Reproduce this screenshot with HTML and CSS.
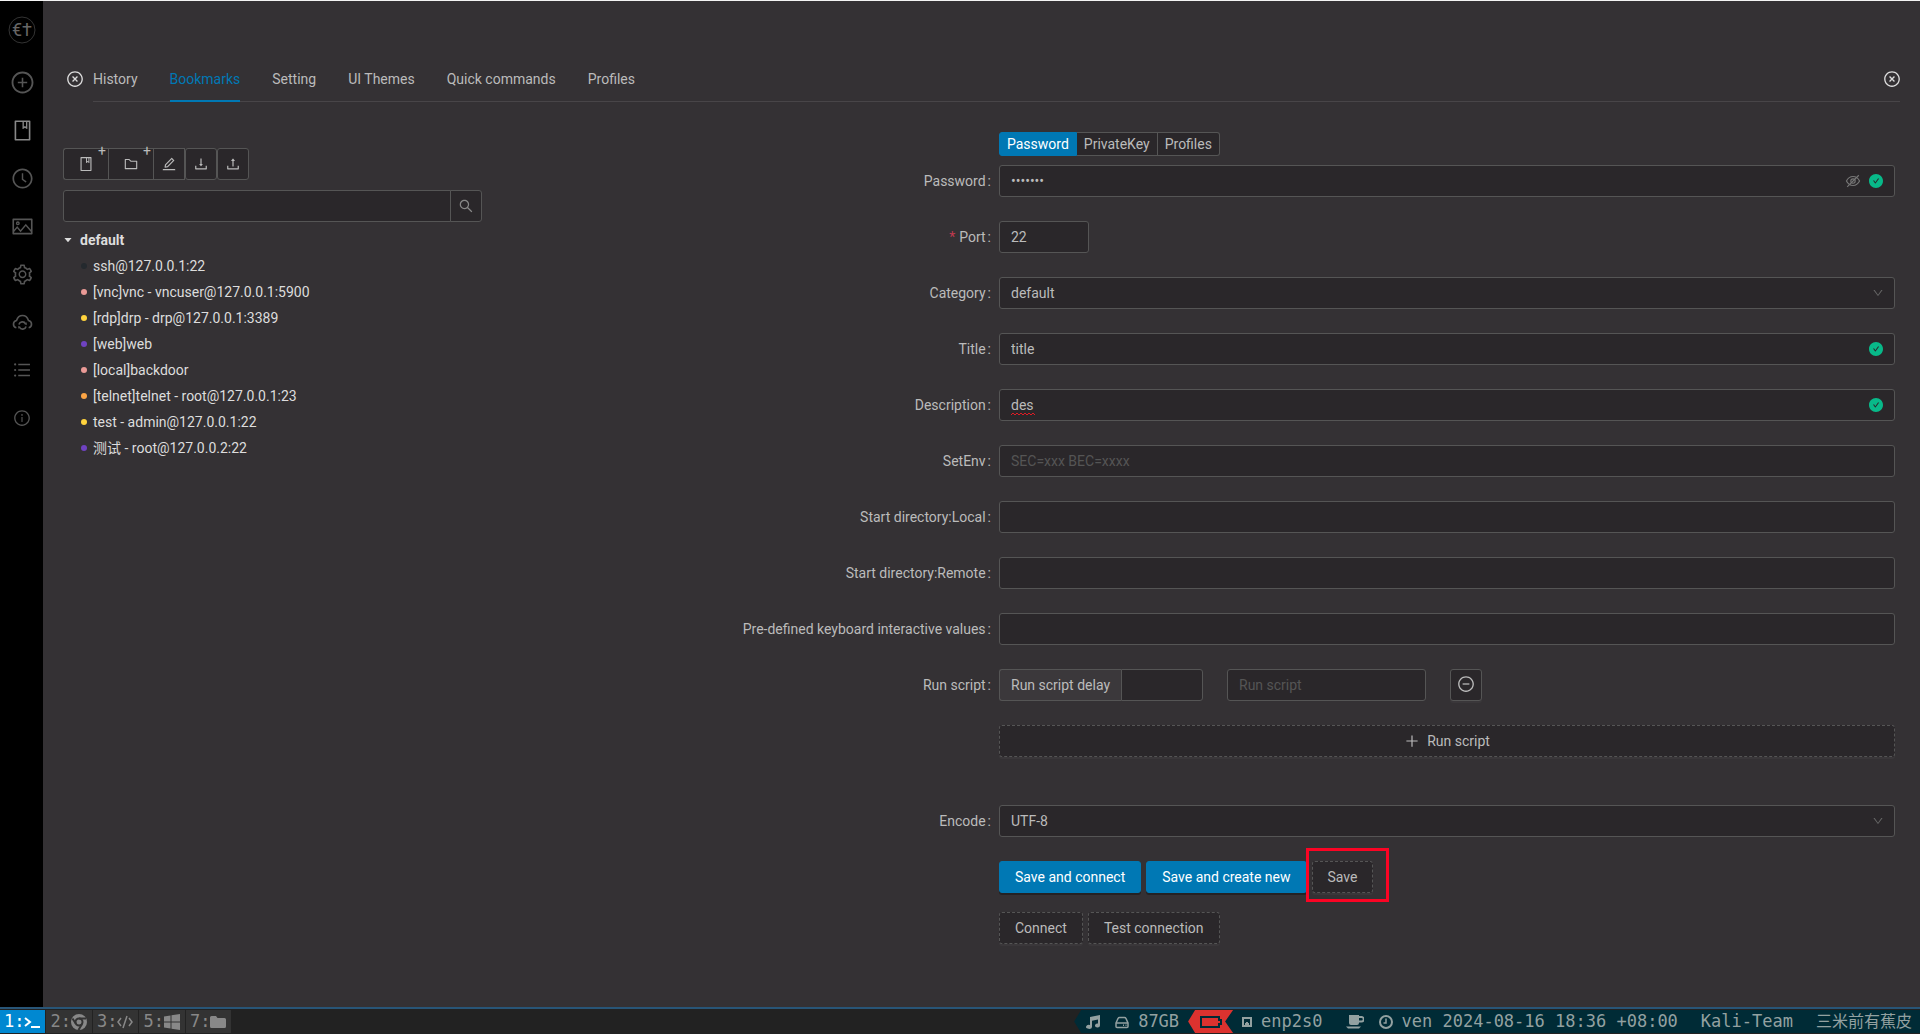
FILE: index.html
```html
<!DOCTYPE html>
<html lang="en">
<head>
  <meta charset="UTF-8">
  <meta name="viewport" content="width=device-width, initial-scale=1.0">
  <title>Bookmarks</title>
  <link rel="stylesheet" href="styles.css">
</head>
<body>
  <!-- Shared icons -->
  <svg class="sprite" aria-hidden="true">
    <symbol id="ring" viewBox="0 0 1024 1024"><path d="M512 64C264.6 64 64 264.6 64 512s200.6 448 448 448 448-200.6 448-448S759.4 64 512 64zm0 820c-205.4 0-372-166.6-372-372s166.6-372 372-372 372 166.6 372 372-166.6 372-372 372z"/></symbol>
    <symbol id="close-circle" viewBox="0 0 1024 1024"><use href="#ring"/><path d="M372 372l280 280M652 372L372 652" stroke="currentColor" stroke-width="76"/></symbol>
    <symbol id="plus-circle" viewBox="0 0 1024 1024"><use href="#ring"/><path d="M480 320h64v160h160v64H544v160h-64V544H320v-64h160z"/></symbol>
    <symbol id="minus-circle" viewBox="0 0 1024 1024"><use href="#ring"/><path d="M320 476h384v72H320z"/></symbol>
    <symbol id="clock" viewBox="0 0 1024 1024"><use href="#ring"/><path d="M686.7 638.6L544.1 535.5V288c0-4.4-3.6-8-8-8H488c-4.4 0-8 3.6-8 8v275.4c0 2.6 1.2 5 3.3 6.5l165.4 120.6c3.6 2.6 8.6 1.8 11.2-1.7l28.6-39c2.6-3.7 1.8-8.7-1.8-11.2z"/></symbol>
    <symbol id="info" viewBox="0 0 1024 1024"><use href="#ring"/><path d="M464 336a48 48 0 1096 0 48 48 0 10-96 0zm72 112h-48c-4.4 0-8 3.6-8 8v272c0 4.4 3.6 8 8 8h48c4.4 0 8-3.6 8-8V456c0-4.4-3.6-8-8-8z"/></symbol>
    <symbol id="book" viewBox="0 0 1024 1024"><path d="M832 64H192c-17.7 0-32 14.3-32 32v832c0 17.7 14.3 32 32 32h640c17.7 0 32-14.3 32-32V96c0-17.7-14.3-32-32-32zm-260 72h96v209.9L621.5 312 572 347.4V136zm220 752H232V136h280v296.9c0 3.3 1 6.6 3 9.3a15.9 15.9 0 0022.3 3.7l83.8-59.9 81.4 59.4c2.7 2 6 3.1 9.4 3.1 8.8 0 16-7.2 16-16V136h64v752z"/></symbol>
    <symbol id="picture" viewBox="0 0 1024 1024"><path d="M928 160H96c-17.7 0-32 14.3-32 32v640c0 17.7 14.3 32 32 32h832c17.7 0 32-14.3 32-32V192c0-17.7-14.3-32-32-32zm-40 632H136v-39.9l138.5-164.3 150.1 178L658.1 489 888 761.6V792zm0-129.8L664.2 396.8c-3.2-3.8-9-3.8-12.2 0L424.6 666.4l-144-170.7c-3.2-3.8-9-3.8-12.2 0L136 652.7V232h752v430.2zM304 456a88 88 0 100-176 88 88 0 000 176zm0-116c15.5 0 28 12.5 28 28s-12.5 28-28 28-28-12.5-28-28 12.5-28 28-28z"/></symbol>
    <symbol id="setting" viewBox="0 0 1024 1024"><path d="M924.8 625.7l-65.5-56c3.1-19 4.7-38.4 4.7-57.8s-1.6-38.8-4.7-57.8l65.5-56a32.03 32.03 0 009.3-35.2l-.9-2.6a443.74 443.74 0 00-79.7-137.9l-1.8-2.1a32.12 32.12 0 00-35.1-9.5l-81.3 28.9c-30-24.6-63.5-44-99.7-57.6l-15.7-85a32.05 32.05 0 00-25.8-25.7l-2.7-.5c-52.1-9.4-106.9-9.4-159 0l-2.7.5a32.05 32.05 0 00-25.8 25.7l-15.8 85.4a351.86 351.86 0 00-99 57.4l-81.9-29.1a32 32 0 00-35.1 9.5l-1.8 2.1a446.02 446.02 0 00-79.7 137.9l-.9 2.6c-4.5 12.5-.8 26.5 9.3 35.2l66.3 56.6c-3.1 18.8-4.6 38-4.6 57.1 0 19.2 1.5 38.4 4.6 57.1L99 625.5a32.03 32.03 0 00-9.3 35.2l.9 2.6c18.1 50.4 44.9 96.9 79.7 137.9l1.8 2.1a32.12 32.12 0 0035.1 9.5l81.9-29.1c29.8 24.5 63.1 43.9 99 57.4l15.8 85.4a32.05 32.05 0 0025.8 25.7l2.7.5a449.4 449.4 0 00159 0l2.7-.5a32.05 32.05 0 0025.8-25.7l15.7-85a350 350 0 0099.7-57.6l81.3 28.9a32 32 0 0035.1-9.5l1.8-2.1c34.8-41.1 61.6-87.5 79.7-137.9l.9-2.6c4.5-12.3.8-26.3-9.3-35zM788.3 465.9c2.5 15.1 3.8 30.6 3.8 46.1s-1.3 31-3.8 46.1l-6.6 40.1 74.7 63.9a370.03 370.03 0 01-42.6 73.6L721 702.8l-31.4 25.8c-23.9 19.6-50.5 35-79.3 45.8l-38.1 14.3-17.9 97a377.5 377.5 0 01-85 0l-17.9-97.2-37.8-14.5c-28.5-10.8-55-26.2-78.7-45.7l-31.4-25.9-93.4 33.2c-17-22.9-31.2-47.6-42.6-73.6l75.5-64.5-6.5-40c-2.4-14.9-3.7-30.3-3.7-45.5 0-15.3 1.2-30.6 3.7-45.5l6.5-40-75.5-64.5c11.3-26.1 25.6-50.7 42.6-73.6l93.4 33.2 31.4-25.9c23.7-19.5 50.2-34.9 78.7-45.7l37.9-14.3 17.9-97.2c28.1-3.2 56.8-3.2 85 0l17.9 97 38.1 14.3c28.7 10.8 55.4 26.2 79.3 45.8l31.4 25.8 92.8-32.9c17 22.9 31.2 47.6 42.6 73.6L781.8 426l6.5 39.9zM512 326c-97.2 0-176 78.8-176 176s78.8 176 176 176 176-78.8 176-176-78.8-176-176-176zm79.2 255.2A111.6 111.6 0 01512 614c-29.9 0-58-11.7-79.2-32.8A111.6 111.6 0 01400 502c0-29.9 11.7-58 32.8-79.2C454 401.6 482.1 390 512 390c29.9 0 58 11.6 79.2 32.8A111.6 111.6 0 01624 502c0 29.9-11.7 58-32.8 79.2z"/></symbol>
    <symbol id="cloud-sync" viewBox="0 0 1024 1024"><g fill="none" stroke="currentColor" stroke-width="72"><path d="M238 748A168 168 0 01246 420C292 286 394 200 512 200s220 86 266 220a168 168 0 018 328"/><path d="M352 600a162 162 0 01300-30M672 690a162 162 0 01-300 30"/></g><path d="M700 500v130l-110-50zM324 790V660l110 50z"/></symbol>
    <symbol id="list" viewBox="0 0 1024 1024"><path d="M320 192h600v72H320zM320 476h600v72H320zM320 760h600v72H320z"/><circle cx="160" cy="228" r="56"/><circle cx="160" cy="512" r="56"/><circle cx="160" cy="796" r="56"/></symbol>
    <symbol id="folder" viewBox="0 0 1024 1024"><path d="M880 298.4H521L403.7 186.2a8.15 8.15 0 00-5.5-2.2H144c-17.7 0-32 14.3-32 32v592c0 17.7 14.3 32 32 32h736c17.7 0 32-14.3 32-32V330.4c0-17.7-14.3-32-32-32zM840 768H184V256h188.5l119.6 114.4H840V768z"/></symbol>
    <symbol id="edit" viewBox="0 0 1024 1024"><path d="M257.7 752c2 0 4-.2 6-.5L431.9 722c2-.4 3.9-1.3 5.3-2.8l423.9-423.9a9.96 9.96 0 000-14.1L694.9 114.9c-1.9-1.9-4.4-2.9-7.1-2.9s-5.2 1-7.1 2.9L256.8 538.8c-1.5 1.5-2.4 3.3-2.8 5.3l-29.5 168.2a33.5 33.5 0 009.4 29.8c6.6 6.4 14.9 9.9 23.8 9.9zm67.4-174.4L687.8 215l73.3 73.3-362.7 362.6-88.9 15.7 15.6-89zM880 836H144c-17.7 0-32 14.3-32 32v36c0 4.4 3.6 8 8 8h784c4.4 0 8-3.6 8-8v-36c0-17.7-14.3-32-32-32z"/></symbol>
    <symbol id="tray" viewBox="0 0 1024 1024"><path d="M878 626h-60c-4.4 0-8 3.6-8 8v154H214V634c0-4.4-3.6-8-8-8h-60c-4.4 0-8 3.6-8 8v198c0 17.7 14.3 32 32 32h684c17.7 0 32-14.3 32-32V634c0-4.4-3.6-8-8-8z"/></symbol>
    <symbol id="download" viewBox="0 0 1024 1024"><use href="#tray"/><path d="M505.7 661a8 8 0 0012.6 0l112-141.7c4.1-5.2.4-12.9-6.3-12.9h-74.1V168c0-4.4-3.6-8-8-8h-60c-4.4 0-8 3.6-8 8v338.3H400c-6.7 0-10.4 7.7-6.3 12.9l112 141.8z"/></symbol>
    <symbol id="upload" viewBox="0 0 1024 1024"><use href="#tray"/><path d="M400 317.7h73.9V656c0 4.4 3.6 8 8 8h60c4.4 0 8-3.6 8-8V317.7H624c6.7 0 10.4-7.7 6.3-12.9L518.3 163a8 8 0 00-12.6 0l-112 141.7c-4.1 5.3-.4 13 6.3 13z"/></symbol>
    <symbol id="search" viewBox="0 0 1024 1024"><path d="M909.6 854.5L649.9 594.8C690.2 542.7 712 479 712 412c0-80.2-31.3-155.4-87.9-212.1-56.6-56.7-132-87.9-212.1-87.9s-155.5 31.3-212.1 87.9C143.2 256.5 112 331.8 112 412c0 80.1 31.3 155.5 87.9 212.1C256.5 680.8 331.8 712 412 712c67 0 130.6-21.8 182.7-62l259.7 259.6a8.2 8.2 0 0011.6 0l43.6-43.5a8.2 8.2 0 000-11.6zM570.4 570.4C528 612.7 471.8 636 412 636s-116-23.3-158.4-65.6C211.3 528 188 471.8 188 412s23.3-116.1 65.6-158.4C296 211.3 352.2 188 412 188s116.1 23.2 158.4 65.6S636 352.2 636 412s-23.3 116.1-65.6 158.4z"/></symbol>
    <symbol id="caret-down" viewBox="0 0 1024 1024"><path d="M840.4 300H183.6c-19.7 0-30.7 20.8-18.5 35l328.4 380.8c9.4 10.9 27.5 10.9 37 0L858.9 335c12.2-14.2 1.2-35-18.5-35z"/></symbol>
    <symbol id="down" viewBox="0 0 1024 1024"><path d="M884 256h-75c-5.1 0-9.9 2.5-12.9 6.6L512 654.2 227.9 262.6c-3-4.1-7.8-6.6-12.9-6.6h-75c-6.5 0-10.3 7.4-6.5 12.7l352.6 486.1c12.8 17.6 39 17.6 51.7 0l352.6-486.1c3.9-5.3.1-12.7-6.4-12.7z"/></symbol>
    <symbol id="check" viewBox="0 0 1024 1024"><path d="M512 64C264.6 64 64 264.6 64 512s200.6 448 448 448 448-200.6 448-448S759.4 64 512 64zm193.5 301.7l-210.6 292a31.8 31.8 0 01-51.7 0L318.5 484.9c-3.8-5.3 0-12.7 6.5-12.7h46.9c10.2 0 19.9 4.9 25.9 13.3l71.2 98.8 157.2-218c6-8.3 15.6-13.3 25.9-13.3H699c6.5 0 10.3 7.4 6.5 12.7z"/></symbol>
    <symbol id="eye-off" viewBox="0 0 1024 1024"><g fill="none" stroke="currentColor" stroke-width="72"><path d="M92 512C190 320 330 226 512 226s322 94 420 286c-98 192-238 286-420 286S190 704 92 512z"/><circle cx="512" cy="512" r="140"/><path d="M140 888L884 144"/></g></symbol>
    <symbol id="plus" viewBox="0 0 1024 1024"><path d="M474 152h76v322h322v76H550v322h-76V550H152v-76h322z"/></symbol>
  </svg>

  <div class="app">
    <div class="workspace">
      <nav class="sidebar">
        <a class="logo" href="#" aria-label="Home">
          <svg viewBox="0 0 28 28"><circle cx="14" cy="14" r="13"/><text x="14" y="20">€†</text></svg>
        </a>
        <a href="#" aria-label="New"><svg class="icon icon-xl"><use href="#plus-circle"/></svg></a>
        <a href="#" class="active" aria-label="Bookmarks"><svg class="icon icon-lg"><use href="#book"/></svg></a>
        <a href="#" aria-label="History"><svg class="icon icon-lg"><use href="#clock"/></svg></a>
        <a href="#" aria-label="Themes"><svg class="icon icon-lg"><use href="#picture"/></svg></a>
        <a href="#" aria-label="Setting"><svg class="icon icon-lg"><use href="#setting"/></svg></a>
        <a href="#" aria-label="Sync"><svg class="icon icon-lg"><use href="#cloud-sync"/></svg></a>
        <a href="#" aria-label="Batch"><svg class="icon icon-md"><use href="#list"/></svg></a>
        <a href="#" aria-label="About"><svg class="icon icon-sm"><use href="#info"/></svg></a>
      </nav>

      <main>
        <header class="topbar">
          <button class="close" aria-label="Close"><svg class="icon icon-sm"><use href="#close-circle"/></svg></button>
          <nav class="tabs">
            <a href="#">History</a>
            <a href="#" class="active">Bookmarks</a>
            <a href="#">Setting</a>
            <a href="#">UI Themes</a>
            <a href="#">Quick commands</a>
            <a href="#">Profiles</a>
          </nav>
          <button class="close close-right" aria-label="Close"><svg class="icon icon-sm"><use href="#close-circle"/></svg></button>
        </header>

        <div class="columns">
          <section class="bookmarks">
            <div class="tools">
              <button class="tool wide" aria-label="New bookmark"><svg class="icon icon-tool"><use href="#book"/></svg><span class="add">+</span></button>
              <button class="tool wide" aria-label="New category"><svg class="icon icon-tool"><use href="#folder"/></svg><span class="add">+</span></button>
              <button class="tool" aria-label="Edit"><svg class="icon icon-tool"><use href="#edit"/></svg></button>
              <button class="tool round" aria-label="Import"><svg class="icon icon-tool"><use href="#download"/></svg></button>
              <button class="tool round" aria-label="Export"><svg class="icon icon-tool"><use href="#upload"/></svg></button>
            </div>
            <div class="search">
              <input type="text" class="field" aria-label="Search bookmarks">
              <button class="search-btn" aria-label="Search"><svg class="icon icon-tool"><use href="#search"/></svg></button>
            </div>
            <div class="category"><svg class="icon icon-caret"><use href="#caret-down"/></svg>default</div>
            <ul class="tree">
              <li><i class="dot dark"></i>ssh@127.0.0.1:22</li>
              <li><i class="dot pink"></i>[vnc]vnc - vncuser@127.0.0.1:5900</li>
              <li><i class="dot yellow"></i>[rdp]drp - drp@127.0.0.1:3389</li>
              <li><i class="dot purple"></i>[web]web</li>
              <li><i class="dot pink"></i>[local]backdoor</li>
              <li><i class="dot orange"></i>[telnet]telnet - root@127.0.0.1:23</li>
              <li><i class="dot yellow"></i>test - admin@127.0.0.1:22</li>
              <li><i class="dot purple"></i>测试 - root@127.0.0.2:22</li>
            </ul>
          </section>

          <form class="form" onsubmit="return false">
            <div class="row auth">
              <div class="control segmented">
                <input type="radio" name="auth" id="auth-password" checked><label for="auth-password">Password</label>
                <input type="radio" name="auth" id="auth-key"><label for="auth-key">PrivateKey</label>
                <input type="radio" name="auth" id="auth-profiles"><label for="auth-profiles">Profiles</label>
              </div>
            </div>
            <div class="row">
              <label class="label" for="password">Password</label>
              <div class="control">
                <input class="field" type="password" id="password" value="1234567">
                <span class="suffix"><svg class="icon icon-tool"><use href="#eye-off"/></svg><svg class="icon icon-ok"><use href="#check"/></svg></span>
              </div>
            </div>
            <div class="row">
              <label class="label required" for="port">Port</label>
              <div class="control"><input class="field short" type="text" id="port" value="22"></div>
            </div>
            <div class="row">
              <label class="label" for="category">Category</label>
              <div class="control">
                <select class="field" id="category"><option>default</option></select>
                <span class="suffix arrow"><svg class="icon icon-down"><use href="#down"/></svg></span>
              </div>
            </div>
            <div class="row">
              <label class="label" for="title">Title</label>
              <div class="control">
                <input class="field" type="text" id="title" value="title">
                <span class="suffix"><svg class="icon icon-ok"><use href="#check"/></svg></span>
              </div>
            </div>
            <div class="row">
              <label class="label" for="description">Description</label>
              <div class="control">
                <input class="field" type="text" id="description" value="des">
                <svg class="squiggle" viewBox="0 0 24 4"><path d="M0 3L2 1 4 3 6 1 8 3 10 1 12 3 14 1 16 3 18 1 20 3 22 1 24 3"/></svg>
                <span class="suffix"><svg class="icon icon-ok"><use href="#check"/></svg></span>
              </div>
            </div>
            <div class="row">
              <label class="label" for="env">SetEnv</label>
              <div class="control"><input class="field" type="text" id="env" placeholder="SEC=xxx BEC=xxxx"></div>
            </div>
            <div class="row">
              <label class="label" for="dir-local">Start directory:Local</label>
              <div class="control"><input class="field" type="text" id="dir-local"></div>
            </div>
            <div class="row">
              <label class="label" for="dir-remote">Start directory:Remote</label>
              <div class="control"><input class="field" type="text" id="dir-remote"></div>
            </div>
            <div class="row">
              <label class="label" for="interactive">Pre-defined keyboard interactive values</label>
              <div class="control"><input class="field" type="text" id="interactive"></div>
            </div>
            <div class="row">
              <label class="label" for="script">Run script</label>
              <div class="control scripts">
                <div class="delay">
                  <label for="delay">Run script delay</label>
                  <input class="field" type="text" id="delay">
                </div>
                <input class="field script" type="text" id="script" placeholder="Run script">
                <button class="btn square" aria-label="Remove"><svg class="icon icon-sm"><use href="#minus-circle"/></svg></button>
              </div>
            </div>
            <div class="row add-row">
              <div class="control"><button class="btn dashed block"><svg class="icon icon-tool"><use href="#plus"/></svg>Run script</button></div>
            </div>
            <div class="row">
              <label class="label" for="encode">Encode</label>
              <div class="control">
                <select class="field" id="encode"><option>UTF-8</option></select>
                <span class="suffix arrow"><svg class="icon icon-down"><use href="#down"/></svg></span>
              </div>
            </div>
            <div class="row actions">
              <div class="control buttons">
                <button class="btn primary">Save and connect</button>
                <button class="btn primary">Save and create new</button>
                <div class="marked"><button class="btn dashed">Save</button></div>
              </div>
            </div>
            <div class="row">
              <div class="control buttons">
                <button class="btn dashed">Connect</button>
                <button class="btn dashed">Test connection</button>
              </div>
            </div>
          </form>
        </div>
      </main>
    </div>

    <footer class="statusbar">
      <div class="desktops">
        <button class="current">1:<svg viewBox="0 0 16 16"><path d="M1 4l5 4-5 4M7 13h9"/></svg></button>
        <button>2:<svg viewBox="0 0 16 16"><circle class="fill" cx="8" cy="8" r="8"/><circle class="cut" cx="8" cy="8" r="3.500"/><path class="cut" d="M8 4.500h7M5 10L1.500 4.500M11 10l-3.500 6"/></svg></button>
        <button>3:<svg viewBox="0 0 16 16"><path class="medium" d="M4 4L1 8l3 4M12 4l3 4-3 4M10 2L6 14"/></svg></button>
        <button>5:<svg viewBox="0 0 16 16"><path class="fill" d="M0 2.500l6.500-1v6H0zM7.500 1.300L16 0v7.500H7.500zM0 8.500h6.500v6L0 13.500zM7.500 8.500H16V16l-8.500-1.300z"/></svg></button>
        <button>7:<svg viewBox="0 0 16 16"><path class="fill" d="M0 3.500A1.500 1.500 0 011.500 2H6l1.500 2h7A1.500 1.500 0 0116 5.500v7a1.500 1.500 0 01-1.500 1.500h-13A1.500 1.500 0 010 12.500z"/></svg></button>
      </div>
      <div class="tray">
        <svg viewBox="0 0 14 14"><path class="fill" d="M4 2l10-2v10.500a2.500 2 0 11-2-2V4.500L6 5.700v6.300a3 2 0 11-2-2z"/></svg>
        <span class="item"><svg viewBox="0 0 14 14"><path class="medium" d="M1 8L3 3.500Q3.500 2.500 4.500 2.500h5Q10.500 2.500 11 3.500L13 8v3.500q0 1-1 1H2q-1 0-1-1zM1 8h12M8 10.300h1M10.500 10.300h1"/></svg>87GB</span>
        <span class="battery"><svg viewBox="0 0 22 12"><path d="M1 1h18v3h2v4h-2v3H1z"/></svg></span>
        <span class="item net"><svg class="small" viewBox="0 0 10 10"><path d="M1 1h8v8H1z"/><path class="fill" d="M3 8V6h1V5h2v1h1v2z"/></svg>enp2s0</span>
        <svg class="cup" viewBox="0 0 18 14"><path class="fill" d="M3 0h10v8a2 2 0 01-2 2H5a2 2 0 01-2-2zM0 11.500h15l-2 2H2z"/><path d="M13 2h2.500a1.500 1.500 0 010 4.500H13"/></svg>
        <span class="item"><svg viewBox="0 0 14 14"><circle cx="7" cy="7" r="6"/><path class="medium" d="M7 3.500V8H4.500"/></svg>ven 2024-08-16 18:36 +08:00</span>
        <span>Kali-Team</span>
        <span class="cjk">三米前有蕉皮</span>
      </div>
    </footer>
  </div>
</body>
</html>
```
FILE: styles.css
```css
/* Base styles */
* {
  box-sizing: border-box;
}

body {
  margin: 0;
  background: #343134;
  color: #ddd;
  font-family: Roboto, "Noto Sans CJK SC", sans-serif;
  font-size: 14px;
  line-height: 22px;
}

a {
  color: inherit;
  text-decoration: none;
}

button,
input,
select {
  font: inherit;
  color: inherit;
  margin: 0;
}

button {
  cursor: pointer;
}

.sprite {
  display: none;
}

.icon {
  width: 14px;
  height: 14px;
  flex: none;
  fill: currentColor;
}

.icon-tool { width: 16px; height: 16px; }
.icon-sm { width: 18px; height: 18px; }
.icon-md { width: 20px; height: 20px; }
.icon-lg { width: 23px; height: 23px; }
.icon-xl { width: 25px; height: 25px; }
.icon-caret { width: 10px; height: 10px; }
.icon-down { width: 12px; height: 12px; }
.icon-ok { width: 16px; height: 16px; color: #08b989; }

/* Layout */
.app {
  display: flex;
  flex-direction: column;
  min-height: 100vh;
  border-top: 1px solid #f4f4f4;
}

.workspace {
  flex: 1;
  display: flex;
}

.sidebar {
  flex: none;
  width: 43px;
  padding-left: 1px;
  background: #000;
  color: #555;
  display: flex;
  flex-direction: column;
}

.sidebar a {
  height: 48px;
  display: flex;
  align-items: center;
  justify-content: center;
}

.sidebar .active {
  color: #888;
}

.sidebar .logo {
  height: 57px;
}

.logo svg {
  width: 28px;
  height: 28px;
}

.logo circle {
  fill: none;
  stroke: #333;
}

.logo text {
  fill: #666;
  font-size: 18px;
  text-anchor: middle;
}

main {
  flex: 1;
  padding: 55px 20px 0;
}

/* Tabs */
.topbar {
  position: relative;
  display: flex;
  align-items: center;
  gap: 9px;
  padding-left: 3px;
}

.close {
  padding: 0;
  border: 0;
  background: none;
  height: 18px;
}

.close-right {
  position: absolute;
  right: -1px;
  top: 14px;
}

.tabs {
  flex: 1;
  display: flex;
  gap: 32px;
  border-bottom: 1px solid #484548;
  color: #bbb;
}

.tabs a {
  padding: 12px 0 11px;
  margin-bottom: -1px;
  border-bottom: 2px solid transparent;
  height: 46px;
}

.tabs .active {
  color: #0078b4;
  border-color: #0078b4;
}

.columns {
  display: flex;
  gap: 69px;
}

/* Bookmarks */
.bookmarks {
  flex: none;
  width: 419px;
  padding-top: 46px;
}

.tools {
  display: flex;
}

.tool {
  position: relative;
  width: 32px;
  height: 32px;
  padding: 0;
  border: 1px solid #555;
  background: #2a272a;
  color: #bbb;
  display: flex;
  align-items: center;
  justify-content: center;
}

.tool.wide {
  width: 45px;
  border-right: 0;
}

.tool:first-child {
  border-radius: 3px 0 0 3px;
}

.tool.round {
  border-radius: 3px;
}

.tool .add {
  position: absolute;
  top: -9px;
  right: 2px;
}

.search {
  display: flex;
  margin: 10px 0 5px;
}

.search .field {
  border-radius: 3px 0 0 3px;
}

.search-btn {
  flex: none;
  width: 32px;
  height: 32px;
  margin-left: -1px;
  padding: 0;
  border: 1px solid #555;
  border-radius: 0 3px 3px 0;
  background: #2a272a;
  color: #888;
  display: flex;
  align-items: center;
  justify-content: center;
}

.category {
  display: flex;
  align-items: center;
  gap: 7px;
  height: 26px;
  font-weight: bold;
}

.tree {
  list-style: none;
  margin: 0;
  padding: 0 0 0 18px;
}

.tree li {
  display: flex;
  align-items: center;
  gap: 6px;
  height: 26px;
}

.dot {
  width: 6px;
  height: 6px;
  border-radius: 50%;
}

.dark { background: #24292e; }
.pink { background: #ea9a96; }
.yellow { background: #ffd33d; }
.purple { background: #6f42c1; }
.orange { background: #fba445; }

/* Form */
.form {
  flex: 1;
  padding: 30px 5px 0 0;
  color: #bbb;
}

.row {
  display: grid;
  grid-template-columns: 1fr 2fr;
  align-items: center;
  margin-bottom: 24px;
}

.row.auth { margin-bottom: 9px; }
.row.add-row { margin-bottom: 48px; }
.row.actions { margin-bottom: 19px; }

.label {
  text-align: right;
  padding-right: 8px;
}

.label::after {
  content: ":";
  margin-left: 2px;
}

.required::before {
  content: "*";
  color: #c03a50;
  margin-right: 4px;
}

.control {
  grid-column: 2;
  position: relative;
}

.field {
  display: block;
  width: 100%;
  min-width: 0;
  height: 32px;
  padding: 4px 11px;
  border: 1px solid #555;
  border-radius: 3px;
  background: #2a272a;
  outline: none;
  appearance: none;
}

.field::placeholder {
  color: #555;
}

.field.short {
  width: 90px;
}

/* Spelling mark under the description */
.squiggle {
  position: absolute;
  left: 12px;
  bottom: 5px;
  width: 24px;
  height: 4px;
  fill: none;
  stroke: #e01b24;
}

.suffix {
  position: absolute;
  right: 11px;
  top: 0;
  height: 32px;
  display: flex;
  align-items: center;
  gap: 7px;
  color: #777;
}

.suffix.arrow {
  color: #666;
}

.segmented {
  display: flex;
}

.segmented input {
  position: absolute;
  opacity: 0;
}

.segmented label {
  height: 24px;
  padding: 0 7px;
  border: 1px solid #555;
  border-left: 0;
  background: #2a272a;
}

.segmented label:first-of-type {
  border-left: 1px solid #555;
  border-radius: 3px 0 0 3px;
}

.segmented label:last-of-type {
  border-radius: 0 3px 3px 0;
}

.segmented input:checked + label {
  background: #0078b4;
  border-color: #0078b4;
  color: #fff;
}

.scripts {
  display: flex;
  gap: 24px;
}

.delay {
  display: flex;
  width: 204px;
}

.delay label {
  flex: none;
  padding: 4px 11px;
  border: 1px solid #555;
  border-right: 0;
  border-radius: 3px 0 0 3px;
  background: #3b383b;
}

.delay .field {
  border-radius: 0 3px 3px 0;
}

.script {
  width: 199px;
}

.btn {
  height: 32px;
  padding: 0 15px;
  border: 1px solid #555;
  border-radius: 3px;
  background: #2a272a;
  box-shadow: 0 2px 0 rgba(255, 255, 255, 0.03);
  display: flex;
  align-items: center;
  justify-content: center;
  gap: 7px;
}

.btn.dashed {
  border-style: dashed;
}

.btn.primary {
  background: #0078b4;
  border-color: #0078b4;
  color: #fff;
  box-shadow: 0 2px 0 rgba(0, 0, 0, 0.3);
}

.btn.square {
  width: 32px;
  padding: 0 0 2px;
}

.btn.block {
  width: 100%;
}

.buttons {
  display: flex;
  gap: 5px;
}

.marked {
  position: relative;
}

.marked::after {
  content: "";
  position: absolute;
  inset: -13px -16px -9px -6px;
  border: 3px solid #fb0424;
  pointer-events: none;
}

/* Status bar */
.statusbar {
  display: flex;
  justify-content: space-between;
  height: 27px;
  padding: 1px 0;
  border-top: 2px solid #285577;
  background: #222;
  font-family: "DejaVu Sans Mono", "Noto Sans CJK SC", monospace;
  font-size: 17px;
  line-height: 23px;
}

.statusbar svg {
  flex: none;
  width: 14px;
  height: 14px;
  fill: none;
  stroke: currentColor;
  stroke-width: 2;
}

.statusbar svg .fill {
  fill: currentColor;
  stroke: none;
}

.statusbar svg .medium {
  stroke-width: 1.5;
}

.statusbar svg .cut {
  stroke: #333;
}

.desktops {
  display: flex;
  gap: 1px;
}

.desktops button {
  display: flex;
  align-items: center;
  padding: 0 5px 0 4px;
  border: 0;
  background: #333;
  color: #888;
}

.desktops svg {
  width: 16px;
  height: 16px;
}

.desktops .current {
  background: #0088d1;
  color: #fff;
}

.tray {
  display: flex;
  align-items: center;
  padding: 0 8px 0 12px;
  gap: 23px;
  background: #002b36;
  color: #93a1a1;
  clip-path: polygon(0 50%, 7px 0, 100% 0, 100% 100%, 7px 100%);
}

.tray > svg:first-child {
  margin-right: -8px;
}

.item {
  display: flex;
  align-items: center;
  gap: 9px;
}

.battery {
  align-self: stretch;
  display: flex;
  align-items: center;
  width: 45px;
  padding-left: 12px;
  margin: 0 -14px;
  background: #dc322f;
  color: #002b36;
  clip-path: polygon(0 50%, 7px 0, 100% 0, 37px 50%, 100% 100%, 7px 100%);
}

.statusbar .battery svg {
  width: 22px;
  height: 12px;
}

.statusbar .small {
  width: 10px;
  height: 10px;
}

.statusbar .cup {
  width: 18px;
  margin-right: -8px;
}

.cjk {
  font-size: 16px;
}
```
